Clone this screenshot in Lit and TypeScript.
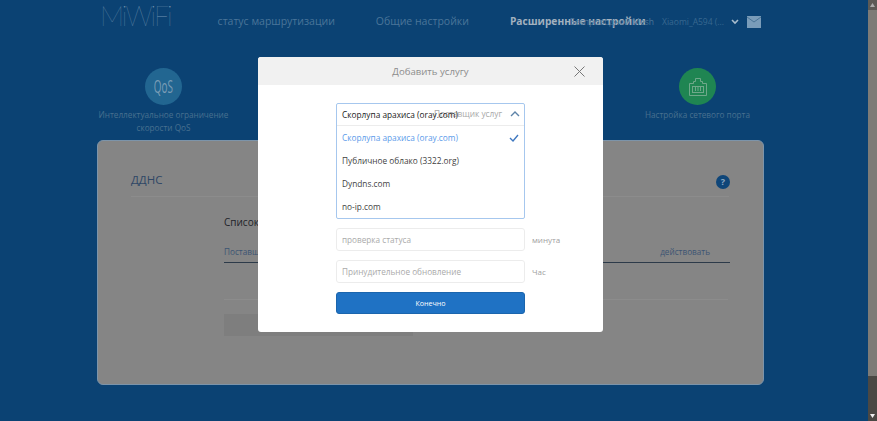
import { LitElement, html, css } from "lit";
import { customElement } from "lit/decorators.js";

@customElement("app-root")
export class AppRoot extends LitElement {
  static styles = css`
    :host { display: block; width: 877px; height: 421px; overflow: hidden; font-family: "Open Sans", "Noto Sans", sans-serif; }
    * { box-sizing: border-box; }
    .root { position: relative; display: flex; width: 877px; height: 421px; background: #0b4273; }
    .page { flex: 1; min-width: 0; display: flex; flex-direction: column; padding-left: 97px; padding-right: 104px; }
    .scrollbar { width: 9px; display: flex; flex-direction: column; background: #4a4844; }
    .thumb { height: 366px; background: #7d7b77; }
    .track { flex: 1; }
    .arrow { height: 11px; display: flex; align-items: center; justify-content: center; }
    .arrow.up { height: 10px; background: #5c5a56; }

    header { height: 42px; display: flex; align-items: flex-start; padding: 0 3px; flex-shrink: 0; }
    .logo { font-family: Lato, sans-serif; font-weight: 100; font-size: 27px; line-height: 32px; color: #7596b2; margin-right: 47px; letter-spacing: -2px; white-space: nowrap; flex-shrink: 0; }
    nav { display: flex; gap: 41px; flex-shrink: 0; margin-right: -200px; padding-top: 13px; font-size: 10.5px; line-height: 17px; color: #4a7599; white-space: nowrap; }
    nav .active { font-size: 10.2px; font-weight: 700; color: #a3b1bf; }
    .user { margin-left: auto; display: flex; align-items: center; height: 17px; margin-top: 13px; font-size: 8.5px; color: #4a7599; white-space: nowrap; flex-shrink: 0; }
    .user .name { margin-left: 8px; width: 62px; color: #386890; }
    .user svg { display: block; }
    .chev { margin-left: 7px; }
    .mail { margin-left: 8px; }

    .tiles { display: flex; justify-content: space-between; padding-top: 26px; height: 98px; flex-shrink: 0; }
    .tile { width: 133px; display: flex; flex-direction: column; align-items: center; text-align: center; font-size: 8.2px; line-height: 13px; color: #48708f; white-space: nowrap; }
    .circle { width: 37px; height: 37px; border-radius: 50%; display: flex; align-items: center; justify-content: center; margin-bottom: 3px; flex-shrink: 0; }
    .circle.qos { background: #226691; color: #7b9db6; font-size: 18px; }
    .circle.qos span { display: block; transform: scaleX(.55); }
    .circle.port { background: #1f8552; }

    .card { height: 245px; background: #858585; border-radius: 6px; border: 1px solid #7c94aa; padding: 30px 34px 0 33px; color: #3d4a5c; flex-shrink: 0; }
    .card-head { height: 26px; display: flex; justify-content: space-between; align-items: flex-start; border-bottom: 1px solid #8c8c8c; font-size: 11.5px; line-height: 18px; color: #2f4766; }
    .help { width: 14px; height: 14px; margin: 4px -1px 0 0; border-radius: 50%; background: #0f4679; color: #8da9c2; font-size: 9px; font-weight: 700; line-height: 14px; text-align: center; }
    .section { margin-left: 93px; margin-right: -1px; }
    .section h3 { margin: 17px 0 0; font-size: 10px; line-height: 16px; font-weight: 400; color: #1e2329; }
    .thead { margin-top: 15px; height: 18px; padding: 1px 20px 0 0; display: flex; justify-content: space-between; border-bottom: 1px solid #2c3a49; font-size: 8.2px; line-height: 12px; color: #3c5473; }
    .empty { height: 37px; border-bottom: 1px solid #8c8c8c; margin-right: 2px; }
    .ghost { width: 189px; height: 22px; margin-top: 14px; background: #7e7e7e; }

    .backdrop { position: absolute; inset: 0; padding: 57px 0 0 258px; }
    .modal { width: 345px; height: 275px; background: #fff; border-radius: 3px; overflow: hidden; }
    .modal-head { height: 28px; background: #f1f1f1; display: flex; align-items: center; justify-content: center; position: relative; font-size: 9.6px; color: #8c8c8c; }
    .close { position: absolute; right: 18px; top: 9px; display: block; }
    .form { padding: 18px 0 0 78px; }
    .select { width: 189px; border: 1px solid #a6c7ee; border-radius: 2px; font-size: 8.3px; color: #3f3f3f; position: relative; }
    .select-head { height: 22px; display: flex; align-items: center; justify-content: space-between; padding: 0 5px 1px; border-bottom: 1px solid #ececec; position: relative; }
    .select-head b { font-weight: 400; color: #222; white-space: nowrap; position: relative; }
    .select-head svg { margin-right: -1px; }
    .ph { position: absolute; right: 22px; top: 0; line-height: 20px; color: #a8a8a8; }
    .opt { height: 23px; display: flex; align-items: center; justify-content: space-between; padding: 0 5px; white-space: nowrap; }
    .opt.on { color: #5b9bea; }
    .row { display: flex; align-items: center; margin-top: 9px; font-size: 8px; color: #a0a0a0; }
    .field { width: 189px; height: 23px; border: 1px solid #ececec; border-radius: 3px; padding: 0 5px; font-size: 8.2px; line-height: 21px; color: #aaa; margin-right: 7px; }
    .ok { width: 189px; height: 22px; margin-top: 9px; background: #1f72c4; border: 1px solid #1b65ad; border-radius: 3px; color: #fff; font: 7.1px/20px "Open Sans", sans-serif; text-align: center; padding: 0; display: block; }
  `;

  render() {
    return html`
      <div class="root">
        <div class="page">
          <header>
            <div class="logo">MiWiFi</div>
            <nav>
              <span>статус маршрутизации</span>
              <span>Общие настройки</span>
              <span class="active">Расширенные настройки</span>
            </nav>
            <div class="user">
              <span>Беспроводной Mesh</span>
              <span class="name">Xiaomi_A594 (...</span>
              <svg class="chev" width="8" height="6" viewBox="0 0 8 6"><path d="M1 1l3 3 3-3" fill="none" stroke="#a9bccd" stroke-width="1.6"/></svg>
              <svg class="mail" width="14" height="12" viewBox="0 0 14 12"><rect width="14" height="12" fill="#7a9cb9"/><path d="M0 1l7 5 7-5" fill="none" stroke="#4a7496" stroke-width="1"/></svg>
            </div>
          </header>
          <div class="tiles">
            <div class="tile">
              <div class="circle qos"><span>QoS</span></div>
              Интеллектуальное ограничение<br />скорости QoS
            </div>
            <div class="tile">
              <div class="circle port">
                <svg width="22" height="20" viewBox="0 0 22 20" fill="none" stroke="#6fa88a" stroke-width="1">
                  <path d="M2.500 18.500V6.500h4v-2h2v-3h5v3h2v2h4v12z"/>
                  <rect x="5.500" y="9.500" width="11" height="6"/>
                  <path d="M8.500 10v4M11 10v4M13.500 10v4"/>
                </svg>
              </div>
              Настройка сетевого порта
            </div>
          </div>
          <section class="card">
            <div class="card-head"><span>ДДНС</span><div class="help">?</div></div>
            <div class="section">
              <h3>Список</h3>
              <div class="thead"><span>Поставщик</span><span>действовать</span></div>
              <div class="empty"></div>
              <div class="ghost"></div>
            </div>
          </section>
        </div>
        <div class="scrollbar">
          <div class="arrow up"><svg width="5" height="4" viewBox="0 0 5 4"><path d="M0 4h5L2.500 0z" fill="#aaa"/></svg></div>
          <div class="thumb"></div>
          <div class="track"></div>
          <div class="arrow"><svg width="5" height="4" viewBox="0 0 5 4"><path d="M0 0h5L2.500 4z" fill="#eee"/></svg></div>
        </div>
        <div class="backdrop">
          <div class="modal">
            <div class="modal-head">
              Добавить услугу
              <svg class="close" width="11" height="11" viewBox="0 0 11 11"><path d="M.5.5l10 10M10.500.5l-10 10" stroke="#777" stroke-width="1" fill="none"/></svg>
            </div>
            <div class="form">
              <div class="select">
                <div class="select-head">
                  <span class="ph">Поставщик услуг</span>
                  <b>Скорлупа арахиса (oray.com)</b>
                  <svg width="10" height="6" viewBox="0 0 10 6"><path d="M1 5l4-4 4 4" fill="none" stroke="#5d83a8" stroke-width="1.4"/></svg>
                </div>
                <div>
                  <div class="opt on">Скорлупа арахиса (oray.com)
                    <svg width="10" height="8" viewBox="0 0 10 8"><path d="M1 4l3 3 5-6" fill="none" stroke="#3f78c0" stroke-width="1.4"/></svg>
                  </div>
                  <div class="opt">Публичное облако (3322.org)</div>
                  <div class="opt">Dyndns.com</div>
                  <div class="opt">no-ip.com</div>
                </div>
              </div>
              <div class="row"><div class="field">проверка статуса</div>минута</div>
              <div class="row"><div class="field">Принудительное обновление</div>Час</div>
              <button class="ok">Конечно</button>
            </div>
          </div>
        </div>
      </div>
    `;
  }
}
